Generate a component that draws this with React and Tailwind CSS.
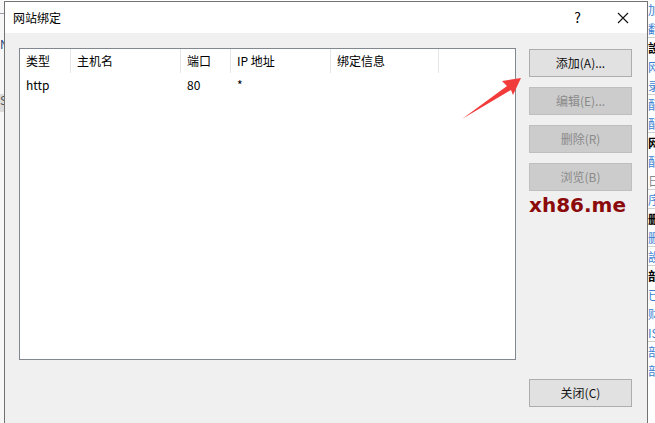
import React from 'react';

const FONT = { fontFamily: '"Noto Sans CJK SC", "Noto Sans", sans-serif' };

const columns = [
  { label: '类型', w: 'w-[51px]' },
  { label: '主机名', w: 'w-[110px]' },
  { label: '端口', w: 'w-[50px]' },
  { label: 'IP 地址', w: 'w-[100px]' },
  { label: '绑定信息', w: 'w-[108px]' },
];

const rows = [['http', '', '80', '*', '']];

const DialogButton = ({ children, disabled }) => (
  <div
    className={
      'flex h-[28px] w-[103px] items-center justify-center border text-[12px] ' +
      (disabled
        ? 'border-[#bfbfbf] bg-[#cccccc] text-[#8a8a8a]'
        : 'border-[#adadad] bg-[#e1e1e1] text-[#111]')
    }
  >
    {children}
  </div>
);

const sideItems = [
  ['加', 'text-[#3c7fd1]', false],
  ['翻', 'text-[#3c7fd1]', true],
  ['設', 'text-black font-bold', false],
  ['网', 'text-[#3c7fd1]', false],
  ['录', 'text-[#3c7fd1]', true],
  ['配', 'text-[#3c7fd1]', false],
  ['配', 'text-[#3c7fd1]', true],
  ['网', 'text-black font-bold', false],
  ['配', 'text-[#3c7fd1]', false],
  ['日', 'text-[#888]', true],
  ['序', 'text-[#3c7fd1]', true],
  ['删', 'text-black font-bold', false],
  ['删', 'text-[#3c7fd1]', true],
  ['設', 'text-[#3c7fd1]', true],
  ['部', 'text-black font-bold', false],
  ['已', 'text-[#3c7fd1]', false],
  ['财', 'text-[#3c7fd1]', false],
  ['IS', 'text-[#3c7fd1]', true],
  ['部', 'text-[#3c7fd1]', false],
  ['部', 'text-[#3c7fd1]', false],
];

const App = () => {
  return (
    <div className="relative flex h-[423px] w-[655px] overflow-hidden bg-white" style={FONT}>
      {/* left sliver of the window behind */}
      <div className="flex w-[4px] shrink-0 flex-col bg-[#f7f7f7] text-[12px] leading-none">
        <div className="h-[14px] border-b border-[#9a9aaa]" />
        <div className="mt-[24px] overflow-hidden text-[#1d3f7a]">N</div>
        <div className="mt-[44px] h-[18px] overflow-hidden bg-[#dcdcdc] text-[#555]">S</div>
      </div>

      {/* dialog */}
      <div className="mt-[1px] flex w-[644px] shrink-0 flex-col border border-b-0 border-[#727272]">
        <div className="flex h-[31px] items-center bg-white pl-[8px] text-[12px] text-black">
          <span>网站绑定</span>
          <span className="ml-auto mr-[36px] text-[14px]">?</span>
          <svg width="12" height="12" viewBox="0 0 12 12" className="mr-[18px]">
            <path d="M1 1 L11 11 M11 1 L1 11" stroke="#111" strokeWidth="1.1" />
          </svg>
        </div>

        <div className="flex flex-1 bg-[#f0f0f0] pl-[14px] pt-[15px]">
          {/* bindings list */}
          <div className="h-[312px] w-[497px] shrink-0 border border-[#828790] bg-white">
            <div className="flex h-[24px] text-[12px] text-black">
              {columns.map((c) => (
                <div
                  key={c.label}
                  className={c.w + ' flex items-center border-r border-[#e5e5e5] pl-[6px]'}
                >
                  {c.label}
                </div>
              ))}
            </div>
            {rows.map((r, i) => (
              <div key={i} className="flex h-[24px] items-center text-[12px] text-black">
                {r.map((cell, j) => (
                  <div key={j} className={columns[j].w + ' pl-[6px]'}>
                    {cell}
                  </div>
                ))}
              </div>
            ))}
          </div>

          {/* buttons */}
          <div className="ml-[13px] flex w-[103px] shrink-0 flex-col pt-[1px]">
            <DialogButton>添加(A)...</DialogButton>
            <div className="mt-[10px]">
              <DialogButton disabled>编辑(E)...</DialogButton>
            </div>
            <div className="mt-[10px]">
              <DialogButton disabled>删除(R)</DialogButton>
            </div>
            <div className="mt-[10px]">
              <DialogButton disabled>浏览(B)</DialogButton>
            </div>
            <div
              className="h-[28px] whitespace-nowrap text-[20px] font-bold leading-[28px] text-[#8b0a0a]"
              style={{ fontFamily: '"DejaVu Sans", sans-serif' }}
            >
              xh86.me
            </div>
            <div className="mt-[160px]">
              <DialogButton>关闭(C)</DialogButton>
            </div>
          </div>
        </div>
      </div>

      {/* right sliver of the window behind */}
      <div className="flex w-[7px] shrink-0 flex-col overflow-hidden bg-white text-[12px] leading-[19px]">
        {sideItems.map(([t, cls, line], i) => (
          <div key={i} className={'h-[19px] whitespace-nowrap ' + cls + (line ? ' border-b border-[#cfcfcf]' : '')}>
            {t}
          </div>
        ))}
      </div>

      {/* red annotation arrow */}
      <svg className="pointer-events-none absolute left-0 top-0" width="655" height="423">
        <polygon
          points="521,78 502,81 507,86 462,119 511,90 513,95"
          fill="#f23b3b"
        />
      </svg>
    </div>
  );
};

export default App;
